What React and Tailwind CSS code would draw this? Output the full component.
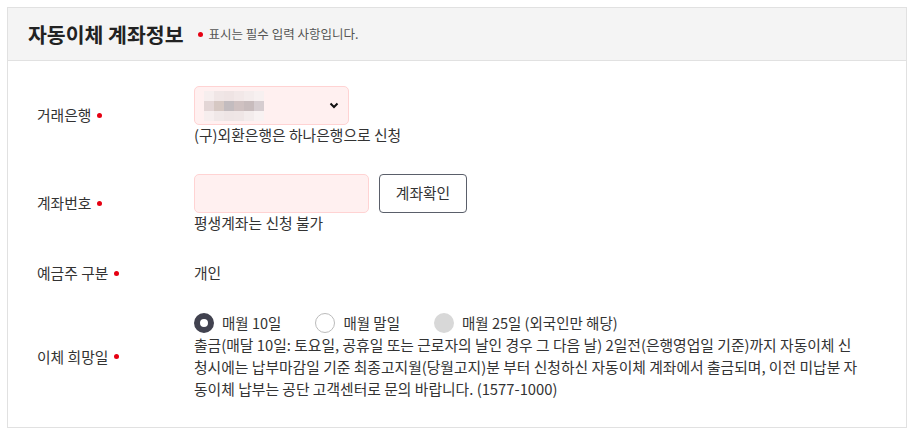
import React from "react";

const mosaic = [
  ["#f6eeee", "#f0e6e6", "#efe4e4", "#f2e8e8", "#f4ecec", "#f7f0f0"],
  ["#e3d6d6", "#d6c8c3", "#c3bcbf", "#cfc1c1", "#c8bcbd", "#d6cdd0"],
  ["#f6eeee", "#f0e8e8", "#eee5e5", "#efe6e6", "#f3ecec", "#f8f2f2"],
];

function Dot() {
  return <span className="inline-block w-[5px] h-[5px] rounded-full bg-[#e60012]" />;
}

function Row({ label, children }) {
  return (
    <div className="flex items-center">
      <div className="w-[157px] shrink-0 flex items-center gap-[6px] text-[14.8px] text-[#333]">
        <span>{label}</span>
        <Dot />
      </div>
      <div className="flex-1 min-w-0">{children}</div>
    </div>
  );
}

export default function App() {
  return (
    <div className="w-[913px] h-[436px] bg-white pt-[7px] pl-[7px] font-['Noto_Sans_CJK_KR','Noto_Sans',sans-serif] text-[#333]">
      <div className="w-[900px] h-[421px] border border-[#e1e1e1] bg-white">
        {/* header */}
        <div className="h-[53px] bg-[#f4f4f4] border-b border-[#e1e1e1] flex items-center pl-[20px]">
          <h2 className="text-[20.5px] font-bold text-[#222] leading-none">자동이체 계좌정보</h2>
          <span className="ml-[14px] inline-block w-[5px] h-[5px] rounded-full bg-[#e60012]" />
          <span className="ml-[6px] text-[12.5px] text-[#555]">표시는 필수 입력 사항입니다.</span>
        </div>

        {/* body */}
        <div className="pl-[29px] pr-[50px] pt-[25px] flex flex-col gap-[29px]">
          <Row label="거래은행">
            <div className="w-[155px] h-[39px] rounded-[5px] border border-[#ffd3d3] bg-[#fff0f0] flex items-center justify-between pl-[9px] pr-[8px]">
              <div className="grid grid-cols-6 w-[60px] h-[30px]">
                {mosaic.flat().map((c, i) => (
                  <div key={i} style={{ background: c }} />
                ))}
              </div>
              <svg width="10" height="7" viewBox="0 0 10 7" className="mr-[1px]">
                <path d="M1.5 1.5 L5 5 L8.5 1.5" fill="none" stroke="#111" strokeWidth="2" />
              </svg>
            </div>
            <p className="text-[14.8px] leading-[20px]">(구)외환은행은 하나은행으로 신청</p>
          </Row>

          <Row label="계좌번호">
            <div className="flex gap-[10px]">
              <div className="w-[175px] h-[39px] rounded-[5px] border border-[#ffd3d3] bg-[#fff0f0]" />
              <button className="w-[88px] h-[39px] rounded-[4px] border border-[#5a5f6a] bg-white text-[14.8px] text-[#333]">
                계좌확인
              </button>
            </div>
            <p className="text-[14.8px] leading-[20px]">평생계좌는 신청 불가</p>
          </Row>

          <Row label="예금주 구분">
            <p className="text-[14.8px] leading-[20px]">개인</p>
          </Row>

          <Row label="이체 희망일">
            <div className="flex items-center text-[14.5px] h-[20px]">
              <span className="w-[20px] h-[20px] rounded-full border-[6px] border-[#41424f] bg-white" />
              <span className="ml-[8px]">매월 10일</span>
              <span className="ml-[34px] w-[20px] h-[20px] rounded-full border border-[#bbb] bg-white" />
              <span className="ml-[8px]">매월 말일</span>
              <span className="ml-[34px] w-[20px] h-[20px] rounded-full bg-[#d8d8d8]" />
              <span className="ml-[8px]">매월 25일 (외국인만 해당)</span>
            </div>
            <p className="mt-[1px] text-[14.8px] leading-[22px] break-all w-[664px]">
              출금(매달 10일: 토요일, 공휴일 또는 근로자의 날인 경우 그 다음 날) 2일전(은행영업일 기준)까지 자동이체 신청시에는 납부마감일 기준 최종고지월(당월고지)분 부터 신청하신 자동이체 계좌에서 출금되며, 이전 미납분 자동이체 납부는 공단 고객센터로 문의 바랍니다. (1577-1000)
            </p>
          </Row>
        </div>
      </div>
    </div>
  );
}
